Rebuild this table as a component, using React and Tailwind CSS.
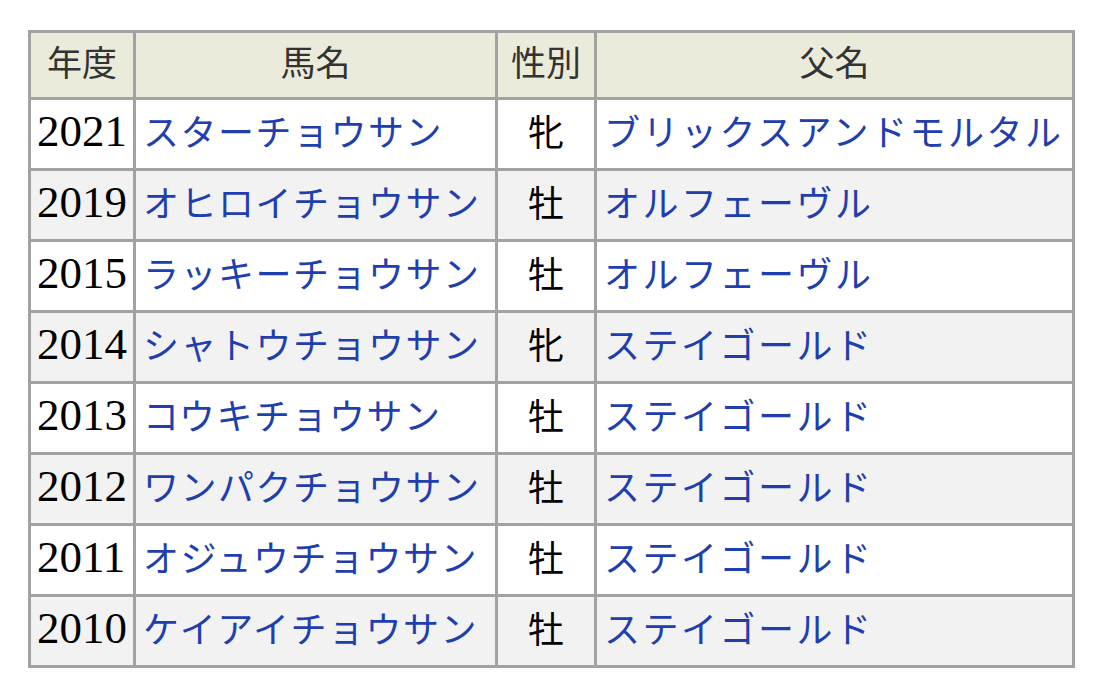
import React from 'react'

const rows = [
  ['2021', 'スターチョウサン', '牝', 'ブリックスアンドモルタル'],
  ['2019', 'オヒロイチョウサン', '牡', 'オルフェーヴル'],
  ['2015', 'ラッキーチョウサン', '牡', 'オルフェーヴル'],
  ['2014', 'シャトウチョウサン', '牝', 'ステイゴールド'],
  ['2013', 'コウキチョウサン', '牡', 'ステイゴールド'],
  ['2012', 'ワンパクチョウサン', '牡', 'ステイゴールド'],
  ['2011', 'オジュウチョウサン', '牡', 'ステイゴールド'],
  ['2010', 'ケイアイチョウサン', '牡', 'ステイゴールド'],
]

export default function App() {
  return (
    <div className="w-[1110px] h-[682px] bg-white pt-[30px] pl-[28px]" style={{ fontFamily: '"Liberation Serif", "Noto Sans CJK JP", serif' }}>
      <table className="table-fixed border-collapse border-[3px] border-[#a2a2a2] w-[1044px]">
        <colgroup>
          <col className="w-[105px]" />
          <col className="w-[362px]" />
          <col className="w-[99px]" />
          <col className="w-[478px]" />
        </colgroup>
        <thead>
          <tr className="h-[67px] bg-[#ebebdb] text-[#333] text-[35px]">
            <th className="border-[3px] border-[#a2a2a2] font-normal text-center">年度</th>
            <th className="border-[3px] border-[#a2a2a2] font-normal text-center">馬名</th>
            <th className="border-[3px] border-[#a2a2a2] font-normal text-center">性別</th>
            <th className="border-[3px] border-[#a2a2a2] font-normal text-center">父名</th>
          </tr>
        </thead>
        <tbody>
          {rows.map((r, i) => (
            <tr key={r[0]} className={'h-[71px] ' + (i % 2 === 1 ? 'bg-[#f2f2f2]' : 'bg-white')}>
              <td className="border-[3px] border-[#a2a2a2] text-[45px] text-black pl-[6px] pb-[5px] leading-none whitespace-nowrap">{r[0]}</td>
              <td className="border-[3px] border-[#a2a2a2] text-[36px] text-[#1f3fae] pl-[7px] leading-none whitespace-nowrap tracking-[1.5px]">{r[1]}</td>
              <td className="border-[3px] border-[#a2a2a2] text-[36px] text-black text-center leading-none">{r[2]}</td>
              <td className="border-[3px] border-[#a2a2a2] text-[36px] text-[#1f3fae] pl-[7px] leading-none whitespace-nowrap tracking-[2.5px]">{r[3]}</td>
            </tr>
          ))}
        </tbody>
      </table>
    </div>
  )
}
